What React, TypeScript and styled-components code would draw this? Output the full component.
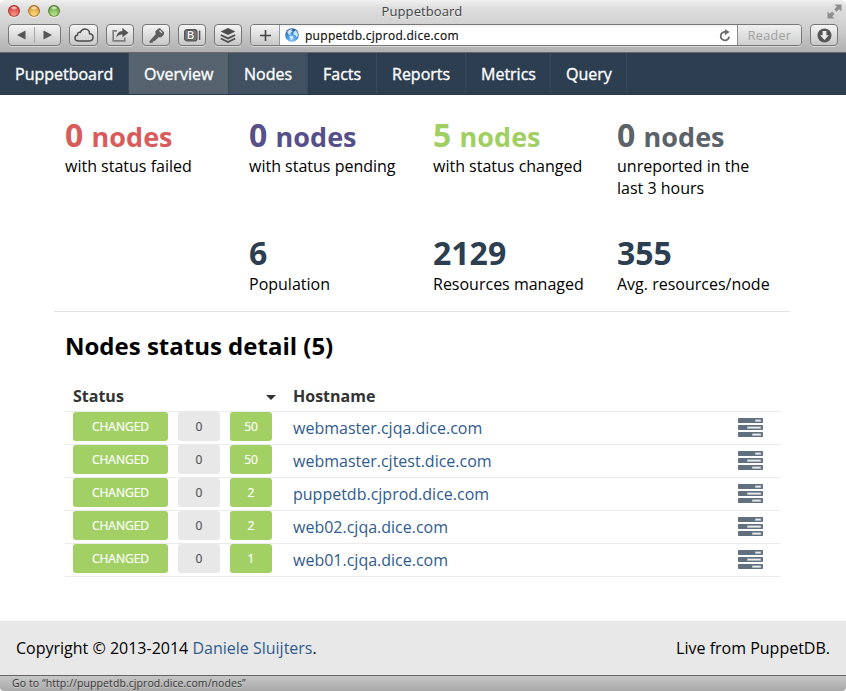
import React from "react";
import styled, { createGlobalStyle } from "styled-components";

const GlobalStyle = createGlobalStyle`
  * { box-sizing: border-box; }
  html, body { margin: 0; padding: 0; background: #fff; overflow: hidden; }
  body { font-family: "Open Sans", "Noto Sans", sans-serif; font-size: 16px; color: #000; }
  h1, h2, p { margin: 0; }
  svg { display: block; }
`;

const Window = styled.div`
  width: 846px;
  height: 691px;
  display: flex;
  flex-direction: column;
  overflow: hidden;
  border-radius: 5px 5px 4px 4px;
`;

const Chrome = styled.header`
  position: relative;
  height: 53px;
  flex: none;
  background: linear-gradient(#f0f0f0 0, #dedede 8px, #cfcfcf 28px, #b1b1b1 51px);
  border-bottom: 1px solid #686868;
`;

const TitleBar = styled.div`
  display: flex;
  align-items: center;
  height: 24px;
  padding: 0 4px 0 8px;
`;

const Lights = styled.div`
  display: flex;
  gap: 8px;
  width: 86px;
  padding-bottom: 2px;
`;

const Light = styled.i<{ $light: string; $dark: string }>`
  width: 12px;
  height: 12px;
  border-radius: 50%;
  background:
    radial-gradient(ellipse 4px 2px at 50% 24%, rgba(255, 255, 255, 0.95), transparent),
    radial-gradient(circle at 50% 85%, ${(p) => p.$light} 0, ${(p) => p.$dark} 85%);
  box-shadow: inset 0 0 1px 1px rgba(70, 30, 20, 0.45), 0 1px 0 rgba(255, 255, 255, 0.6);
`;

const WindowTitle = styled.div`
  flex: 1;
  text-align: center;
  font-size: 13px;
  line-height: 22px;
  padding-bottom: 2px;
  letter-spacing: 0.08px;
  color: #444;
  text-shadow: 0 1px 0 rgba(255, 255, 255, 0.6);
`;

const TitleEnd = styled.div`
  width: 92px;
  height: 24px;
  padding-top: 4px;
  display: flex;
  justify-content: flex-end;
`;

const Toolbar = styled.div`
  display: flex;
  gap: 8px;
  padding: 0 8px;
  height: 22px;
`;

const ToolButton = styled.button<{ $width: number }>`
  width: ${(p) => p.$width}px;
  height: 22px;
  padding: 0;
  display: flex;
  align-items: center;
  justify-content: center;
  border: 1px solid #777;
  border-radius: 4px;
  background: linear-gradient(#f5f5f5, #c7c7c7);
  box-shadow: 0 1px 0 rgba(255, 255, 255, 0.45);
  color: #555;
`;

const HistoryHalf = styled.span`
  flex: 1;
  height: 16px;
  display: flex;
  align-items: center;
  justify-content: center;
  & + & { border-left: 1px solid #aaa; }
`;

const AddressGroup = styled.div`
  width: 552px;
  height: 22px;
  display: flex;
  border: 1px solid #777;
  border-radius: 4px;
  overflow: hidden;
  box-shadow: 0 1px 0 rgba(255, 255, 255, 0.45);
`;

const AddButton = styled.div`
  width: 29px;
  display: flex;
  align-items: center;
  justify-content: center;
  background: linear-gradient(#f5f5f5, #c7c7c7);
  border-right: 1px solid #999;
`;

const AddressField = styled.div`
  flex: 1;
  display: flex;
  align-items: center;
  padding: 0 6px 0 5px;
  background: linear-gradient(#f0f0f0, #fff 3px);
`;

const AddressText = styled.span`
  flex: 1;
  margin-left: 6px;
  font-size: 12px;
  line-height: 20px;
  padding-top: 1px;
  letter-spacing: 0.28px;
  color: #111;
  -webkit-text-stroke: 0.2px #111;
`;

const Reader = styled.div`
  width: 64px;
  border-left: 1px solid #8b8b8b;
  background: linear-gradient(#f0f0f0, #cfcfcf);
  text-align: center;
  font-size: 12.5px;
  line-height: 21px;
  letter-spacing: 0.35px;
  color: #a0a0a0;
`;

const Nav = styled.nav`
  height: 42px;
  flex: none;
  display: flex;
  background: #2c3e50;
  border-bottom: 1px solid #27394b;
`;

const NavItem = styled.a<{ $width: number; $state?: "active" | "hover" }>`
  width: ${(p) => p.$width}px;
  padding-left: 15px;
  border-right: 1px solid #37495a;
  line-height: 42px;
  white-space: nowrap;
  color: #fff;
  -webkit-text-stroke: 0.35px #fff;
  background: ${(p) => (p.$state === "active" ? "#56636f" : p.$state === "hover" ? "#415161" : "transparent")};
`;

const Main = styled.main`
  flex: 1;
  width: 736px;
  margin-left: 54px;
`;

const Stats = styled.section`
  display: grid;
  grid-template-columns: repeat(4, 184px);
  grid-template-rows: 118px 98px;
  height: 217px;
  border-bottom: 1px solid #e2e2e2;
`;

const Stat = styled.div<{ $column: number; $row: number }>`
  grid-column: ${(p) => p.$column};
  grid-row: ${(p) => p.$row};
  padding: 20px 0 0 11px;
`;

const Figure = styled.h1<{ $color: string }>`
  font-size: 32px;
  line-height: 40px;
  font-weight: 700;
  color: ${(p) => p.$color};
  white-space: nowrap;
`;

const Unit = styled.small`
  font-size: 27px;
  line-height: 1;
`;

const Label = styled.p`
  line-height: 22px;
  max-width: 156px;
  white-space: pre-line;
`;

const Heading = styled.h2`
  margin: 16px 0 0 11px;
  font-size: 24px;
  line-height: 36px;
  font-weight: 700;
`;

const NodeTable = styled.section`
  width: 715px;
  margin: 17px 0 0 11px;
`;

const Row = styled.div`
  display: grid;
  grid-template-columns: 95px 42px 42px 1fr 25px;
  column-gap: 10px;
  height: 33px;
  padding: 0 17px 0 8px;
  border-bottom: 1px solid #ebebeb;
`;

const HeadRow = styled.div`
  display: grid;
  grid-template-columns: 193px 27px 1fr;
  height: 31px;
  padding-left: 8px;
  line-height: 30px;
  font-weight: 700;
  color: #333;
  border-bottom: 1px solid #ebebeb;
`;

const SortMark = styled.i`
  width: 0;
  height: 0;
  margin-top: 14px;
  border: 5px solid transparent;
  border-top-color: #333;
  border-bottom: 0;
`;

const Badge = styled.span<{ $muted?: boolean }>`
  height: 29px;
  border-radius: 3px;
  text-align: center;
  font-size: 12px;
  line-height: 29px;
  color: ${(p) => (p.$muted ? "#555" : "#fff")};
  -webkit-text-stroke: 0.2px currentColor;
  background: ${(p) => (p.$muted ? "#e8e8e8" : "#a2d064")};
`;

const HostLink = styled.a`
  margin-left: 11px;
  line-height: 33px;
  color: #2f5b8e;
`;

const ReportIcon = styled.svg`
  margin-top: 6px;
`;

const Footer = styled.footer`
  height: 54px;
  flex: none;
  display: flex;
  justify-content: space-between;
  padding: 0 16px 0 16px;
  line-height: 54px;
  background: #e8e8e8;
`;

const AuthorLink = styled.a`
  color: #2f5b8e;
`;

const StatusBar = styled.div`
  height: 16px;
  flex: none;
  padding-left: 12px;
  border-top: 1px solid #666;
  background: linear-gradient(#c6c6c6, #a9a9a9);
  font-size: 10.5px;
  line-height: 14px;
  letter-spacing: 0.08px;
  color: #333;
  text-shadow: 0 1px 0 rgba(255, 255, 255, 0.35);
`;

const navItems: { label: string; width: number; state?: "active" | "hover" }[] = [
  { label: "Puppetboard", width: 129 },
  { label: "Overview", width: 100, state: "active" },
  { label: "Nodes", width: 79, state: "hover" },
  { label: "Facts", width: 69 },
  { label: "Reports", width: 89 },
  { label: "Metrics", width: 85 },
  { label: "Query", width: 76 },
];

const stats = [
  { column: 1, row: 1, value: "0", unit: "nodes", label: "with status failed", color: "#d95c5c" },
  { column: 2, row: 1, value: "0", unit: "nodes", label: "with status pending", color: "#564f8a" },
  { column: 3, row: 1, value: "5", unit: "nodes", label: "with status changed", color: "#a1cf64" },
  { column: 4, row: 1, value: "0", unit: "nodes", label: "unreported in the\nlast 3 hours", color: "#5b6269" },
  { column: 2, row: 2, value: "6", label: "Population", color: "#2c3e50" },
  { column: 3, row: 2, value: "2129", label: "Resources managed", color: "#2c3e50" },
  { column: 4, row: 2, value: "355", label: "Avg. resources/node", color: "#2c3e50" },
];

const nodes = [
  { host: "webmaster.cjqa.dice.com", failures: 0, changes: 50 },
  { host: "webmaster.cjtest.dice.com", failures: 0, changes: 50 },
  { host: "puppetdb.cjprod.dice.com", failures: 0, changes: 2 },
  { host: "web02.cjqa.dice.com", failures: 0, changes: 2 },
  { host: "web01.cjqa.dice.com", failures: 0, changes: 1 },
];

const Triangle = ({ left }: { left?: boolean }) => (
  <svg width="9" height="10" viewBox="0 0 9 10">
    <path d={left ? "M8.5 .5v9L0 5z" : "M.5 .5v9L9 5z"} fill="#555" />
  </svg>
);

const Cloud = () => (
  <svg width="20" height="14" viewBox="0 0 20 14" fill="none" stroke="#4b4b4b" strokeWidth="1.5">
    <path d="M4.7 12.9C2.5 12.9 1 11.7 1 9.9 1 8.3 2.1 7.2 3.5 7 3.3 5.1 4.8 3.9 6.4 4.3 7.2 2.2 8.9 1 10.9 1c2.7 0 4.7 2.1 4.7 4.8 2 .1 3.4 1.6 3.4 3.5 0 2.1-1.5 3.6-3.7 3.6z" />
  </svg>
);

const Share = () => (
  <svg width="17" height="14" viewBox="0 0 17 14">
    <path d="M5 2.8H1.2v10h11.6V9.5" fill="none" stroke="#808080" strokeWidth="1.7" />
    <path d="M10.4 0L16.5 4.7l-6.1 4.5V6.5C7.5 6.3 5.8 7.3 4.4 9.8 4.6 5.7 6.7 3.2 10.4 3z" fill="#555" />
  </svg>
);

const KeyIcon = () => (
  <svg width="15" height="15" viewBox="0 0 15 15">
    <path fillRule="evenodd" d="M8.5 1.2L10.7 0 15 4.3v2.2l-2.6 2.7H9.7L5.8 13H4.1v1.4L1.4 15 0 13.7 6.7 6.2 6.2 3.4zm2.4.7-.9.9 2.5 2.5.9-.9z" fill="#5e5e5e" />
  </svg>
);

const BoldCard = () => (
  <svg width="17" height="13" viewBox="0 0 17 13">
    <rect x=".6" y=".6" width="12.4" height="11.3" rx="2.5" fill="#777" stroke="#555" strokeWidth="1.2" />
    <text x="3" y="9.9" fontFamily="Liberation Sans" fontWeight="700" fontSize="10" fill="#f2f2f2" stroke="#444" strokeWidth="1" paintOrder="stroke">B</text>
    <path d="M15.6 1.5v9.5" stroke="#555" strokeWidth="1.5" />
  </svg>
);

const Layers = () => (
  <svg width="16" height="15" viewBox="0 0 16 15">
    <path d="M8 0l7.4 3.5L8 7.1.6 3.5z" fill="#4d4d4d" />
    <path d="M.8 7L8 10.4 15.2 7M.8 10.5L8 14l7.2-3.5" fill="none" stroke="#4d4d4d" strokeWidth="1.8" />
  </svg>
);

const Globe = () => (
  <svg width="14" height="14" viewBox="0 0 14 14">
    <defs>
      <radialGradient id="sea" cx=".5" cy=".8" r=".8">
        <stop offset="0" stopColor="#83caff" />
        <stop offset=".6" stopColor="#3586d7" />
        <stop offset="1" stopColor="#1c4897" />
      </radialGradient>
    </defs>
    <circle cx="7" cy="7" r="6.8" fill="url(#sea)" />
    <path d="M2.2 3.8C4 1.2 6.5 1 7.7 1.3L6.5 2.6l1 1-2.4 1.8.8 1.4-1.5.3L3 5.8zM5.5 7.4l3 1.2-.9 2.5-1.8 1.4-.3-2.6-1.2-1.3zM9 3.4l1.8-1.2 1.8 2.9.2 3.2-1.4 1-.8-2-1.8-.4-.5-2z" fill="#e2f3ff" opacity=".88" />
  </svg>
);

const Reload = () => (
  <svg width="12" height="13" viewBox="0 0 12 13">
    <path d="M6.5 3A4.2 4.2 0 1 0 10.1 7.6" fill="none" stroke="#6b6b6b" strokeWidth="1.8" />
    <path d="M5.8 0l4.8 3.1L5.8 6.2z" fill="#6b6b6b" />
  </svg>
);

const Download = () => (
  <svg width="15" height="15" viewBox="0 0 15 15">
    <circle cx="7.5" cy="7.5" r="7" fill="#565656" />
    <path d="M5.6 3h3.8v4.3h2.4L7.5 12 3.2 7.3h2.4z" fill="#eee" />
  </svg>
);

const Expand = () => (
  <svg width="15" height="15" viewBox="0 0 15 15" fill="#8d8d8d">
    <path d="M7.5.5h7v7l-2.3-2.3-2.6 2.5-2.3-2.3 2.5-2.6zM.5 7.5l2.3 2.3 2.3-2.2 2.3 2.3-2.2 2.3 2.3 2.3h-7z" />
  </svg>
);

const Tasks = () => (
  <ReportIcon width="25" height="20" viewBox="0 0 25 20">
    <g fill="#61707e">
      <rect y="0" width="25" height="5" rx=".7" />
      <rect y="7" width="25" height="5" rx=".7" />
      <rect y="14" width="25" height="5" rx=".7" />
    </g>
    <g fill="#fff" stroke="#b5bdc4" strokeWidth=".8">
      <rect x="17.4" y="1.9" width="5.4" height="1.5" />
      <rect x="9.4" y="8.9" width="13.4" height="1.5" />
      <rect x="14.4" y="15.9" width="8.4" height="1.5" />
    </g>
  </ReportIcon>
);

export default function App() {
  return (
    <>
      <GlobalStyle />
      <Window>
        <Chrome>
          <TitleBar>
            <Lights>
              <Light $light="#ff9a8d" $dark="#cf2d2d" />
              <Light $light="#ffe28a" $dark="#d38a20" />
              <Light $light="#bdec91" $dark="#559b38" />
            </Lights>
            <WindowTitle>Puppetboard</WindowTitle>
            <TitleEnd><Expand /></TitleEnd>
          </TitleBar>
          <Toolbar>
            <ToolButton $width={53} aria-label="History">
              <HistoryHalf><Triangle left /></HistoryHalf>
              <HistoryHalf><Triangle /></HistoryHalf>
            </ToolButton>
            <ToolButton $width={29} aria-label="iCloud tabs"><Cloud /></ToolButton>
            <ToolButton $width={28} aria-label="Share"><Share /></ToolButton>
            <ToolButton $width={28} aria-label="Passwords"><KeyIcon /></ToolButton>
            <ToolButton $width={28} aria-label="Bookmark"><BoldCard /></ToolButton>
            <ToolButton $width={28} aria-label="Buffer"><Layers /></ToolButton>
            <AddressGroup>
              <AddButton>
                <svg width="11" height="11" viewBox="0 0 11 11"><path d="M5.5 0v11M0 5.5h11" stroke="#444" strokeWidth="1.6" /></svg>
              </AddButton>
              <AddressField>
                <Globe />
                <AddressText>puppetdb.cjprod.dice.com</AddressText>
                <Reload />
              </AddressField>
              <Reader>Reader</Reader>
            </AddressGroup>
            <ToolButton $width={28} aria-label="Downloads"><Download /></ToolButton>
          </Toolbar>
        </Chrome>
        <Nav>
          {navItems.map((item) => (
            <NavItem key={item.label} $width={item.width} $state={item.state}>{item.label}</NavItem>
          ))}
        </Nav>
        <Main>
          <Stats>
            {stats.map((s) => (
              <Stat key={s.label} $column={s.column} $row={s.row}>
                <Figure $color={s.color}>{s.value}{s.unit && <> <Unit>{s.unit}</Unit></>}</Figure>
                <Label>{s.label}</Label>
              </Stat>
            ))}
          </Stats>
          <Heading>Nodes status detail (5)</Heading>
          <NodeTable>
            <HeadRow><span>Status</span><SortMark /><span>Hostname</span></HeadRow>
            {nodes.map((n) => (
              <Row key={n.host}>
                <Badge>CHANGED</Badge>
                <Badge $muted>{n.failures}</Badge>
                <Badge>{n.changes}</Badge>
                <HostLink>{n.host}</HostLink>
                <Tasks />
              </Row>
            ))}
          </NodeTable>
        </Main>
        <Footer>
          <span>Copyright © 2013-2014 <AuthorLink>Daniele Sluijters</AuthorLink>.</span>
          <span>Live from PuppetDB.</span>
        </Footer>
        <StatusBar>Go to “http://puppetdb.cjprod.dice.com/nodes”</StatusBar>
      </Window>
    </>
  );
}
